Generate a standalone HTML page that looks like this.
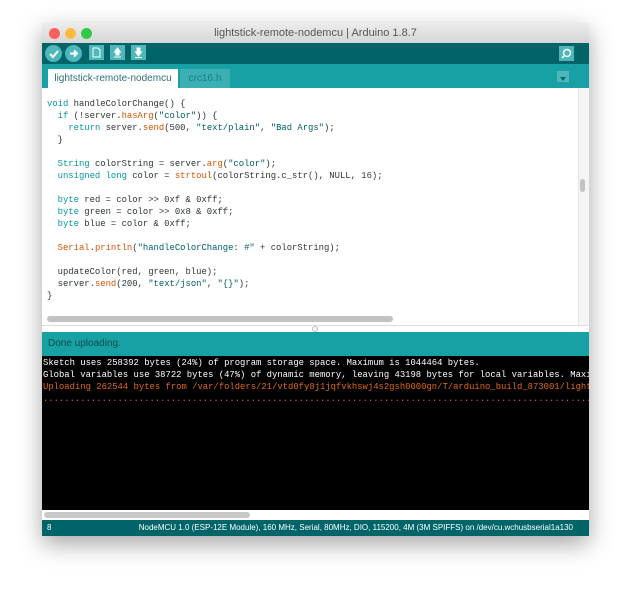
<!DOCTYPE html>
<html><head><style>
body{margin:0;width:630px;height:596px;background:#fff;position:relative;overflow:hidden;font-family:"Liberation Sans",sans-serif}
.win{position:absolute;left:42px;top:23px;width:547px;height:513px;box-shadow:0 8px 22px rgba(0,0,0,.35);background:#fff}
.title{height:20px;background:linear-gradient(#ececec,#d6d6d6);text-align:center;font-size:11px;line-height:20px;color:#555;position:relative}
.dot{position:absolute;top:5px;width:11px;height:11px;border-radius:50%}
.tb{position:absolute;top:20px;left:0;right:0;height:21px;background:#006468}
.circ{position:absolute;top:2px;width:17px;height:17px;border-radius:50%;background:#4db7bb}
.sq{position:absolute;top:2px;width:15px;height:15px;background:#4db7bb}
.tabs{position:absolute;top:41px;left:0;right:0;height:24px;background:#17a1a5}
.tab{position:absolute;top:5px;height:19px;font-size:10px;line-height:19px;text-align:center}
.ed{position:absolute;top:65px;left:0;right:0;height:237px;background:#fff;border-bottom:1px solid #ddd;overflow:hidden}
pre{margin:0;font-family:"Liberation Mono",monospace;font-size:8.9px;line-height:12px;color:#2e3538}
.k{color:#00979c}.o{color:#d35400}.s{color:#005c5f}
.stat{position:absolute;top:309px;left:0;right:0;height:24px;background:#17a1a5;font-size:10px;line-height:24px;padding-left:6px}
.con{position:absolute;top:333px;left:0;right:0;height:154px;background:#000;overflow:hidden}
.con pre{color:#fff;padding-left:1px;line-height:12px;padding-top:1px;white-space:pre}
.bot{position:absolute;top:497px;left:0;right:0;height:16px;background:#006468;color:#fff;font-size:8px;line-height:16px}
</style></head><body>
<div class="win">
<div class="title">lightstick-remote-nodemcu | Arduino 1.8.7
<div class="dot" style="left:7px;background:#fc605c"></div><div class="dot" style="left:23px;background:#fdbc40"></div><div class="dot" style="left:39px;background:#34c84a"></div></div>
<div class="tb">
<div class="circ" style="left:3px"><svg width="17" height="17"><path d="M5 9l3 3 5-6" stroke="#fff" stroke-width="2" fill="none"/></svg></div>
<div class="circ" style="left:23px"><svg width="17" height="17"><path d="M5 8.5h6M9 5.5l3 3-3 3" stroke="#fff" stroke-width="2" fill="none"/></svg></div>
<div class="sq" style="left:47px"><svg width="15" height="15"><path d="M4 3h5l2 2v7H4z" stroke="#fff" fill="none"/></svg></div>
<div class="sq" style="left:68px"><svg width="15" height="15"><path d="M7.5 3l3 4H9v3H6V7H4.5zM4 12h7" stroke="#fff" fill="#fff"/></svg></div>
<div class="sq" style="left:89px"><svg width="15" height="15"><path d="M7.5 11l3-4H9V3H6v4H4.5zM4 12.5h7" stroke="#fff" fill="#fff"/></svg></div>
<div class="sq" style="left:517px;top:3px"><svg width="15" height="15"><circle cx="8" cy="7" r="3.5" stroke="#fff" fill="none" stroke-width="1.5"/><path d="M5.5 9.5L3 12" stroke="#fff" stroke-width="1.5"/></svg></div>
</div>
<div class="tabs">
<div class="tab" style="left:6px;width:130px;background:#fff;color:#2f6f72">lightstick-remote-nodemcu</div>
<div class="tab" style="left:138px;width:50px;background:#3bb0b4;color:#1b7d80">crc16.h</div>
<div style="position:absolute;left:515px;top:7px;width:12px;height:11px;background:#4db7bb"><svg width="12" height="11"><path d="M3 4h6l-3 4z" fill="#06686b"/></svg></div>
</div>
<div class="ed">
<pre style="padding:10px 0 0 5px"><span class="k">void</span> handleColorChange() {
  <span class="k">if</span> (!server.<span class="o">hasArg</span>(<span class="s">"color"</span>)) {
    <span class="k">return</span> server.<span class="o">send</span>(500, <span class="s">"text/plain"</span>, <span class="s">"Bad Args"</span>);
  }

  <span class="k">String</span> colorString = server.<span class="o">arg</span>(<span class="s">"color"</span>);
  <span class="k">unsigned long</span> color = <span class="o">strtoul</span>(colorString.c_str(), NULL, 16);

  <span class="k">byte</span> red = color &gt;&gt; 0xf &amp; 0xff;
  <span class="k">byte</span> green = color &gt;&gt; 0x8 &amp; 0xff;
  <span class="k">byte</span> blue = color &amp; 0xff;

  <span class="o">Serial</span>.<span class="o">println</span>(<span class="s">"handleColorChange: #"</span> + colorString);

  updateColor(red, green, blue);
  server.<span class="o">send</span>(200, <span class="s">"text/json"</span>, <span class="s">"{}"</span>);
}</pre>
<div style="position:absolute;right:0;top:0;width:10px;height:237px;background:#f5f5f5;border-left:1px solid #e6e6e6"></div>
<div style="position:absolute;left:538px;top:91px;width:5px;height:13px;border-radius:3px;background:#c2c2c2"></div>
<div style="position:absolute;left:5px;top:228px;width:346px;height:6px;border-radius:3px;background:#c2c2c2"></div>
</div>
<div style="position:absolute;left:270px;top:303px;width:4px;height:4px;border-radius:50%;border:1px solid #bbb"></div>
<div class="stat" style="color:#0d4b4d">Done uploading.</div>
<div class="con"><pre>Sketch uses 258392 bytes (24%) of program storage space. Maximum is 1044464 bytes.
Global variables use 38722 bytes (47%) of dynamic memory, leaving 43198 bytes for local variables. Maximum
<span style="color:#e0691a">Uploading 262544 bytes from /var/folders/21/vtd0fy8j1jqfvkhswj4s2gsh0000gn/T/arduino_build_873001/lightstick
..............................................................................................................</span></pre></div>
<div style="position:absolute;top:487px;left:0;right:0;height:10px;background:#fff"><div style="position:absolute;left:2px;top:2px;width:206px;height:6px;border-radius:3px;background:#c8c8c8"></div></div>
<div class="bot"><span style="position:absolute;left:5px">8</span><span style="position:absolute;right:16px">NodeMCU 1.0 (ESP-12E Module), 160 MHz, Serial, 80MHz, DIO, 115200, 4M (3M SPIFFS) on /dev/cu.wchusbserial1a130</span></div>
</div>
</body></html>
